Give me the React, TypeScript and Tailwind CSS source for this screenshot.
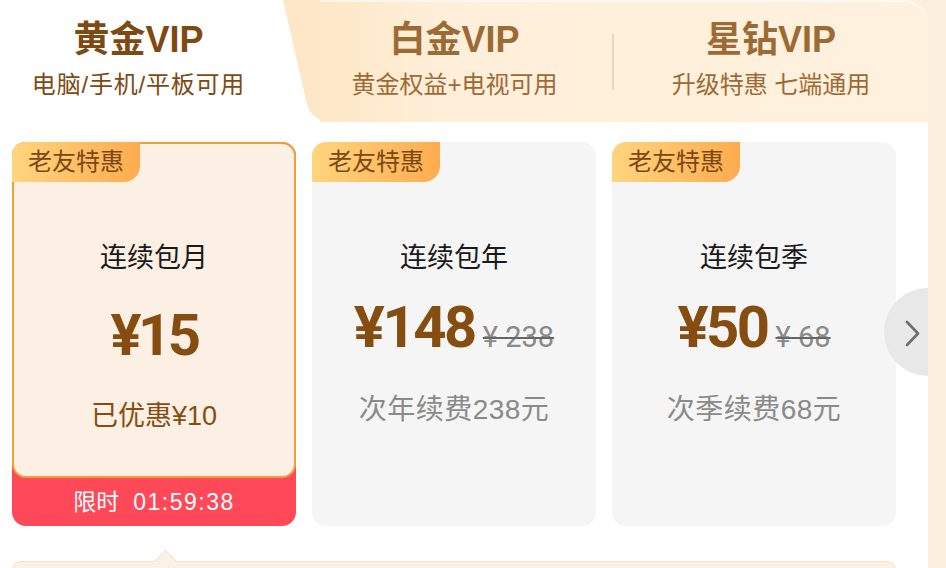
import React from "react";

function Badge() {
  return (
    <div className="absolute left-0 top-0 flex h-[40px] w-[128px] items-center justify-center rounded-tl-[14px] rounded-br-[16px] bg-linear-to-r from-[#ffd57e] to-[#ffab4e] text-[24px] leading-none text-[#7a4813]">
      老友特惠
    </div>
  );
}

function Header() {
  return (
    <div className="relative h-[122px]">
      <div className="absolute right-0 top-0 h-[40px] w-[60px] bg-[#fcefe0]" />
      <div className="absolute bottom-0 top-0 left-[297px] w-[60px] skew-x-[13deg] rounded-bl-[18px] bg-[#fde7c6]" />
      <div className="absolute bottom-0 top-0 left-[320px] right-0 rounded-tr-[24px] bg-[linear-gradient(90deg,#fde7c6_0px,#ffefda_130px,#fff1de_100%)] shadow-[inset_0_2px_0_rgba(255,255,255,0.55)]" />
      <div className="relative flex h-full">
        <div className="flex w-[277px] flex-col items-center pt-[20px]">
          <div className="text-[36px] font-bold leading-[40px] text-[#7e4a12]">黄金VIP</div>
          <div className="mt-[11px] text-[24px] leading-[28px] tracking-[0.8px] text-[#7e4a12]">电脑/手机/平板可用</div>
        </div>
        <div className="ml-[20px] flex w-[315px] flex-col items-center pt-[20px]">
          <div className="text-[36px] font-bold leading-[40px] text-[#9c6b35]">白金VIP</div>
          <div className="mt-[11px] text-[24px] leading-[28px] text-[#9c6b35]">黄金权益+电视可用</div>
        </div>
        <div className="mt-[34px] h-[56px] w-[2px] bg-[#eed5b5]" />
        <div className="flex flex-1 flex-col items-center pt-[20px]">
          <div className="text-[36px] font-bold leading-[40px] text-[#9c6b35]">星钻VIP</div>
          <div className="mt-[11px] text-[24px] leading-[28px] text-[#9c6b35]">升级特惠 七端通用</div>
        </div>
      </div>
    </div>
  );
}

function ActiveCard() {
  return (
    <div className="relative flex h-[384px] w-[284px] flex-col rounded-[14px] bg-[#ff4858]">
      <div className="flex h-[336px] flex-col items-center rounded-[14px] border-2 border-[#f0a03a] bg-[#fcf0e4] pt-[96px]">
        <div className="text-[27px] leading-[36px] text-[#1a1a1a]">连续包月</div>
        <div className="mt-[30px] font-['Roboto'] text-[58px] font-bold leading-[58px] tracking-[-3.5px] text-[#864d10]">¥15</div>
        <div className="mt-[36px] text-[27px] leading-[32px] text-[#864d10]">已优惠¥10</div>
      </div>
      <div className="flex flex-1 items-center justify-center text-[23px] leading-none text-white">
        <span>限时</span>
        <span className="ml-[14px] tracking-[1.5px]">01:59:38</span>
      </div>
      <Badge />
    </div>
  );
}

function PlanCard({ title, price, orig, note }: { title: string; price: string; orig: string; note: string }) {
  return (
    <div className="relative flex h-[384px] w-[284px] flex-col items-center rounded-[14px] bg-[#f5f5f5] pt-[98px]">
      <div className="text-[27px] leading-[36px] text-[#1a1a1a]">{title}</div>
      <div className="mt-[22px] flex items-baseline">
        <span className="font-['Roboto'] text-[58px] font-bold leading-[58px] tracking-[-2.5px] text-[#864d10]">{price}</span>
        <span className="ml-[8px] font-['Roboto'] text-[29px] leading-none text-[#8a8a8a] line-through decoration-[#666666] decoration-2">{orig}</span>
      </div>
      <div className="mt-[38px] text-[28px] leading-[32px] tracking-[0.5px] text-[#8a8a8a]">{note}</div>
      <Badge />
    </div>
  );
}

export default function App() {
  return (
    <div className="flex h-[568px] w-[946px] overflow-hidden bg-[#fcefe0] font-['Liberation_Sans','Noto_Sans_CJK_SC',sans-serif]">
      <div className="relative w-[928px] shrink-0 overflow-hidden bg-white">
        <Header />
        <div className="mt-5 flex gap-4 px-3">
          <ActiveCard />
          <PlanCard title="连续包年" price="¥148" orig="¥ 238" note="次年续费238元" />
          <PlanCard title="连续包季" price="¥50" orig="¥ 68" note="次季续费68元" />
        </div>
        <div className="relative mx-3 mt-[35px] h-[60px] w-[884px] rounded-t-lg border-[1.5px] border-[#fbe3c4] bg-[#fcf1e6]">
          <div className="absolute left-[145px] top-[-9px] h-[15px] w-[15px] rotate-45 border-l-[1.5px] border-t-[1.5px] border-[#fbe3c4] bg-[#fcf1e6]" />
        </div>
        <div className="absolute left-[884px] top-[288px] h-[88px] w-[88px] rounded-full bg-[#e8e8e8]">
          <svg className="absolute left-[20px] top-[31px]" width="18" height="30" viewBox="0 0 18 30" fill="none">
            <path d="M3 3 L14 14.5 L3 26" stroke="#6e6e6e" strokeWidth="2.6" strokeLinecap="round" strokeLinejoin="round" />
          </svg>
        </div>
      </div>
      <div className="flex-1" />
    </div>
  );
}
